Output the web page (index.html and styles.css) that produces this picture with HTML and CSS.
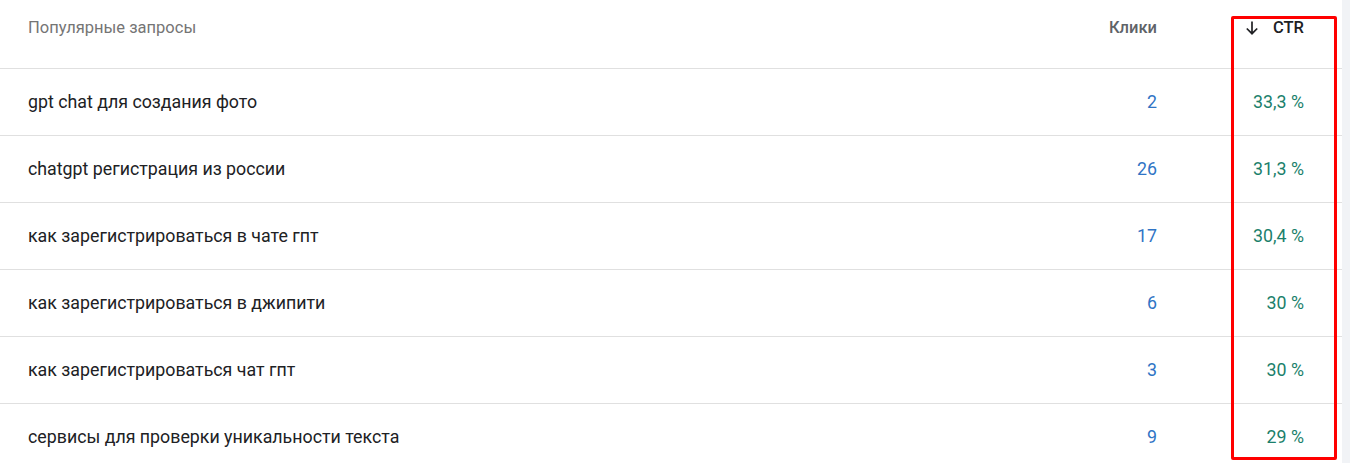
FILE: index.html
```html
<!DOCTYPE html>
<html lang="ru">
<head>
<meta charset="utf-8">
<link rel="stylesheet" href="styles.css">
</head>
<body>
<div class="page">
  <div class="table">
    <div class="row head">
      <div class="cell query">Популярные запросы</div>
      <div class="cell clicks">Клики</div>
      <div class="cell ctr"><span class="sort"><svg width="16" height="16" viewBox="0 0 16 16"><path d="M8 1.5v12M2.8 8.5l5.2 5.2 5.2-5.2" fill="none" stroke="#202124" stroke-width="1.7"/></svg></span>CTR</div>
    </div>
    <div class="row">
      <div class="cell query">gpt chat для создания фото</div>
      <div class="cell clicks">2</div>
      <div class="cell ctr">33,3 %</div>
    </div>
    <div class="row">
      <div class="cell query">chatgpt регистрация из россии</div>
      <div class="cell clicks">26</div>
      <div class="cell ctr">31,3 %</div>
    </div>
    <div class="row">
      <div class="cell query">как зарегистрироваться в чате гпт</div>
      <div class="cell clicks">17</div>
      <div class="cell ctr">30,4 %</div>
    </div>
    <div class="row">
      <div class="cell query">как зарегистрироваться в джипити</div>
      <div class="cell clicks">6</div>
      <div class="cell ctr">30 %</div>
    </div>
    <div class="row">
      <div class="cell query">как зарегистрироваться чат гпт</div>
      <div class="cell clicks">3</div>
      <div class="cell ctr">30 %</div>
    </div>
    <div class="row last">
      <div class="cell query">сервисы для проверки уникальности текста</div>
      <div class="cell clicks">9</div>
      <div class="cell ctr">29 %</div>
    </div>
    <div class="highlight"></div>
  </div>
  <div class="scrollbar"></div>
</div>
</body>
</html>
```

FILE: styles.css
```css
html, body {
  margin: 0;
  padding: 0;
  background: #ffffff;
}
body {
  font-family: Roboto, "Noto Sans", Arial, sans-serif;
  color: #202124;
  overflow: hidden;
}
.page {
  display: flex;
  width: 1350px;
  height: 463px;
}
.table {
  position: relative;
  width: 1342px;
  flex: none;
}
.scrollbar {
  flex: 1;
  background: #f1f3f6;
}
.row {
  display: grid;
  grid-template-columns: 1061px 120px 1fr;
  height: 66px;
  box-sizing: content-box;
  border-bottom: 1px solid #e0e0e0;
  align-items: center;
  font-size: 17.8px;
}
.row:not(.head) .cell {
  padding-bottom: 2px;
}
.row.head {
  height: 68px;
  align-items: start;
  font-size: 16.5px;
}
.row.head .cell {
  padding-top: 18px;
}
.row.last {
  border-bottom: none;
}
.cell.query {
  padding-left: 28px;
}
.cell.clicks {
  text-align: right;
  padding-right: 24px;
  color: #2f74c5;
}
.cell.ctr {
  text-align: right;
  padding-right: 38px;
  color: #1b7f6b;
}
.head .query {
  color: #757575;
}
.head .clicks {
  color: #5f6368;
  font-weight: 500;
}
.head .ctr {
  color: #202124;
  font-weight: 500;
  display: flex;
  justify-content: flex-end;
  align-items: center;
  gap: 13px;
}
.sort {
  display: flex;
}
.highlight {
  position: absolute;
  left: 1231px;
  top: 16px;
  width: 100px;
  height: 438px;
  border: 3px solid #ff0000;
  border-radius: 2px;
}
```
